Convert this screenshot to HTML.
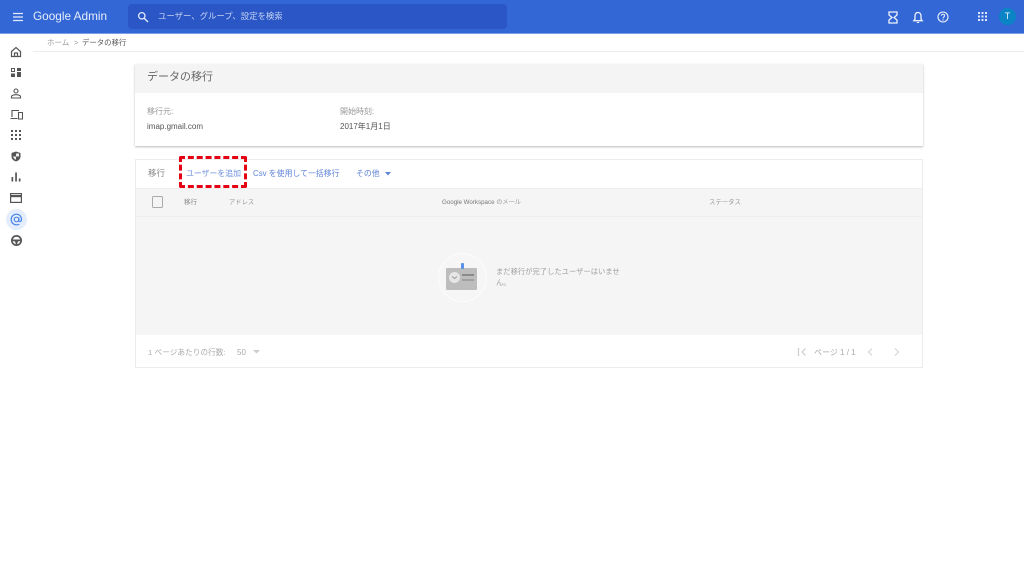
<!DOCTYPE html>
<html lang="ja"><head><meta charset="utf-8"><title>Google Admin</title>
<style>
html,body{margin:0;padding:0;width:1024px;height:576px;overflow:hidden;background:#fff}
body{font-family:"Liberation Sans","Noto Sans CJK JP",sans-serif;position:relative}
.a{position:absolute;white-space:nowrap;line-height:1}
.box{position:absolute;box-sizing:border-box}
svg{position:absolute;display:block}
</style></head><body>
<div class="box" style="left:0;top:0;width:1024px;height:33px;background:#3367d6"></div>
<div class="box" style="left:0;top:33px;width:1024px;height:1px;background:#7a9ce6"></div>
<svg style="left:12px;top:11px" width="12" height="12" viewBox="0 0 12 12"><path d="M1 2.500h10M1 6h10M1 9.500h10" stroke="#e3eafa" stroke-width="1.300"/></svg>
<div class="a" style="left:33px;top:11px;font-size:11.800px;color:#e6edfb">Google Admin</div>
<div class="box" style="left:128px;top:4px;width:379px;height:25px;background:#2a56c6;border-radius:4px"></div>
<svg style="left:137px;top:11px" width="12" height="12" viewBox="0 0 12 12"><circle cx="4.800" cy="4.800" r="3.200" fill="none" stroke="#e3eafa" stroke-width="1.300"/><path d="M7.200 7.200L11 11" stroke="#e3eafa" stroke-width="1.400"/></svg>
<div class="a" style="left:158px;top:12px;font-size:8.400px;color:#c6d4f3">ユーザー、グループ、設定を検索</div>
<svg style="left:887px;top:11px" width="12" height="13" viewBox="0 0 12 13"><path d="M2 1h8v3L7 6.500 10 9v3H2V9l3-2.500L2 4z" fill="none" stroke="#eef2fc" stroke-width="1.300"/></svg>
<svg style="left:912px;top:11px" width="12" height="13" viewBox="0 0 12 13"><path d="M6 1.500c-2 0-3 1.500-3 3.500v3L1.800 9.700h8.400L9 8V5c0-2-1-3.500-3-3.500z" fill="none" stroke="#eef2fc" stroke-width="1.300"/><path d="M4.800 11h2.400v1H4.800z" fill="#eef2fc"/></svg>
<svg style="left:937px;top:11px" width="12" height="12" viewBox="0 0 12 12"><circle cx="6" cy="6" r="5" fill="none" stroke="#eef2fc" stroke-width="1.100"/><path d="M4.400 4.800C4.400 3.800 5.100 3.200 6 3.200s1.600.6 1.600 1.500C7.600 6 6 6 6 7.400" fill="none" stroke="#eef2fc" stroke-width="1"/><circle cx="6" cy="8.900" r=".7" fill="#eef2fc"/></svg>
<svg style="left:978px;top:12px" width="9" height="9" viewBox="0 0 9 9" fill="#dfe7f9"><rect x="0" y="0" width="2" height="2"/><rect x="3.500" y="0" width="2" height="2"/><rect x="7" y="0" width="2" height="2"/><rect x="0" y="3.500" width="2" height="2"/><rect x="3.500" y="3.500" width="2" height="2"/><rect x="7" y="3.500" width="2" height="2"/><rect x="0" y="7" width="2" height="2"/><rect x="3.500" y="7" width="2" height="2"/><rect x="7" y="7" width="2" height="2"/></svg>
<div class="box" style="left:999px;top:8px;width:17px;height:17px;border-radius:50%;background:#0b84c6"></div>
<div class="a" style="left:999px;top:12px;width:17px;text-align:center;font-size:9px;color:#e8f3fa">T</div>

<div class="a" style="left:47px;top:38.500px;font-size:7.500px;color:#999">ホーム</div>
<div class="a" style="left:74px;top:38.500px;font-size:7.500px;color:#999">&gt;</div>
<div class="a" style="left:82px;top:38.500px;font-size:7.400px;color:#555">データの移行</div>
<div class="box" style="left:33px;top:51px;width:991px;height:1px;background:#ececec"></div>

<svg style="left:10px;top:46px" width="12" height="12" viewBox="0 0 12 12"><path d="M1.500 5.500L6 1.500l4.500 4v5h-9z M4.500 10.500V7h3v3.500" fill="none" stroke="#555" stroke-width="1.200"/></svg>
<svg style="left:10px;top:67px" width="12" height="11" viewBox="0 0 12 11" fill="#555"><path d="M1 1h4v4H1zM2 2v2h2V2zM7 1h4v3H7zM1 6.500h4V10H1zM7 5h4v5H7z" fill-rule="evenodd"/></svg>
<svg style="left:10px;top:88px" width="12" height="11" viewBox="0 0 12 11"><circle cx="6" cy="3" r="2" fill="none" stroke="#555" stroke-width="1.100"/><path d="M1.500 10V8.500c0-1 2.200-1.800 4.500-1.800s4.500.8 4.500 1.800V10z" fill="none" stroke="#555" stroke-width="1.100"/></svg>
<svg style="left:10px;top:109px" width="13" height="11" viewBox="0 0 13 11"><path d="M2 8V1.500h7M.500 9.500h7M8.500 3.500h4V10h-4z" fill="none" stroke="#555" stroke-width="1.100"/></svg>
<svg style="left:11px;top:130px" width="10" height="10" viewBox="0 0 10 10" fill="#555"><rect x="0" y="0" width="2" height="2"/><rect x="4" y="0" width="2" height="2"/><rect x="8" y="0" width="2" height="2"/><rect x="0" y="4" width="2" height="2"/><rect x="4" y="4" width="2" height="2"/><rect x="8" y="4" width="2" height="2"/><rect x="0" y="8" width="2" height="2"/><rect x="4" y="8" width="2" height="2"/><rect x="8" y="8" width="2" height="2"/></svg>
<svg style="left:11px;top:151px" width="10" height="11" viewBox="0 0 10 11"><path d="M5 .500L9.500 2v3.500c0 2.500-2 4.300-4.500 5C2.500 9.800.500 8 .500 5.500V2z" fill="#555"/><path d="M5 2.500h3v3H5zM2 5.500h3v3.200C3.500 8.200 2.300 7 2 5.500z" fill="#fff" opacity=".9"/></svg>
<svg style="left:11px;top:172px" width="10" height="10" viewBox="0 0 10 10" fill="#555"><rect x="0.500" y="5" width="1.700" height="4.500"/><rect x="4.200" y="0.500" width="1.700" height="9"/><rect x="7.800" y="6.500" width="1.700" height="3"/></svg>
<svg style="left:10px;top:193px" width="12" height="10" viewBox="0 0 12 10"><rect x=".6" y=".6" width="10.800" height="8.800" fill="none" stroke="#555" stroke-width="1.200"/><rect x="1" y="2" width="10" height="2.200" fill="#555"/></svg>
<div class="box" style="left:6px;top:209px;width:21px;height:21px;border-radius:50%;background:#e3edfc"></div>
<svg style="left:10px;top:213px" width="13" height="13" viewBox="0 0 13 13"><circle cx="6.500" cy="6.500" r="2.300" fill="none" stroke="#4a86e8" stroke-width="1.200"/><path d="M8.800 4.500v3c0 1.500 2.700 1.500 2.700-1C11.500 3.500 9.500 1.200 6.500 1.200S1.200 3.500 1.200 6.500s2.300 5.300 5.300 5.300c1 0 2-.2 2.800-.7" fill="none" stroke="#4a86e8" stroke-width="1.200"/></svg>
<svg style="left:10px;top:234px" width="13" height="13" viewBox="0 0 13 13"><circle cx="6.500" cy="6.500" r="5.500" fill="#555"/><circle cx="6.500" cy="6.500" r="3.800" fill="#fff"/><path d="M2.500 5.500h8v1.500L8 7.500 7 10.500H6L5 7.500 2.500 7z" fill="#555"/></svg>

<div class="box" style="left:135px;top:64px;width:788px;height:82px;background:#fff;box-shadow:0 1px 2px rgba(0,0,0,.28)"></div>
<div class="box" style="left:135px;top:64px;width:788px;height:29px;background:#f4f4f4"></div>
<div class="a" style="left:147px;top:72px;font-size:11px;color:#666">データの移行</div>
<div class="a" style="left:147px;top:107.500px;font-size:8px;color:#999">移行元:</div>
<div class="a" style="left:147px;top:123px;font-size:8px;color:#555">imap.gmail.com</div>
<div class="a" style="left:340px;top:107.500px;font-size:8px;color:#999">開始時刻:</div>
<div class="a" style="left:340px;top:123px;font-size:8px;color:#555">2017年1月1日</div>

<div class="box" style="left:135px;top:159px;width:788px;height:209px;background:#fff;border:1px solid #ececec"></div>
<div class="a" style="left:148px;top:169px;font-size:8.500px;color:#888">移行</div>
<div class="a" style="left:186px;top:169.500px;font-size:7.900px;color:#6f90dc">ユーザーを追加</div>
<div class="a" style="left:253px;top:169.500px;font-size:7.900px;color:#5f84d8">Csv を使用して一括移行</div>
<div class="a" style="left:356px;top:169.500px;font-size:7.900px;color:#5f84d8">その他</div>
<svg style="left:385px;top:172px" width="6" height="4" viewBox="0 0 6 4"><path d="M0 0h6L3 3.500z" fill="#5f84d8"/></svg>

<div class="box" style="left:136px;top:188px;width:786px;height:147px;background:#f5f5f5;border-top:1px solid #eee"></div>
<div class="box" style="left:136px;top:216px;width:786px;height:1px;background:#eeeeee"></div>
<div class="box" style="left:152px;top:196px;width:11px;height:12px;border:1.300px solid #aaa;border-radius:1.500px"></div>
<div class="a" style="left:184px;top:199.500px;font-size:6.500px;color:#888">移行</div>
<div class="a" style="left:229px;top:199.500px;font-size:6.300px;color:#999">アドレス</div>
<div class="a" style="left:442px;top:199.500px;font-size:6.200px;color:#777">Google Workspace <span style="color:#999">のメール</span></div>
<div class="a" style="left:709px;top:199.500px;font-size:6.400px;color:#999">ステータス</div>

<div class="box" style="left:438px;top:253px;width:49px;height:49px;border-radius:50%;background:#f6f6f6;border:1px solid #fcfcfc"></div>
<div class="box" style="left:446px;top:268px;width:31px;height:22px;background:#bdbdbd;border-radius:1px"></div>
<div class="box" style="left:461px;top:263px;width:3px;height:6px;background:#5c8fe8;border-radius:1px"></div>
<div class="box" style="left:449px;top:272px;width:11px;height:11px;border-radius:50%;background:#e6e6e6"></div>
<svg style="left:451px;top:275px" width="7" height="5" viewBox="0 0 7 5"><path d="M1 1.500l2.500 2L6 1.500" fill="none" stroke="#999" stroke-width="1"/></svg>
<div class="box" style="left:462px;top:274px;width:12px;height:2px;background:#8a8a8a"></div>
<div class="box" style="left:462px;top:279px;width:12px;height:2px;background:#a0a0a0"></div>
<div class="a" style="left:496px;top:267.500px;font-size:7.300px;color:#a0a0a0">まだ移行が完了したユーザーはいませ</div>
<div class="a" style="left:496px;top:278.500px;font-size:7.300px;color:#a0a0a0">ん。</div>

<div class="a" style="left:148px;top:348.500px;font-size:7.700px;color:#aaa">1 ページあたりの行数:</div>
<div class="a" style="left:237px;top:348.500px;font-size:8px;color:#aaa">50</div>
<svg style="left:253px;top:350px" width="7" height="4" viewBox="0 0 7 4"><path d="M0 0h7L3.500 3.500z" fill="#ccc"/></svg>
<svg style="left:797px;top:347px" width="10" height="10" viewBox="0 0 10 10"><path d="M1.500 1v8M8.500 1.500L5 5l3.500 3.500" fill="none" stroke="#ccc" stroke-width="1.200"/></svg>
<div class="a" style="left:814px;top:348.500px;font-size:8px;color:#aaa">ページ 1 / 1</div>
<svg style="left:866px;top:347px" width="8" height="10" viewBox="0 0 8 10"><path d="M6 1.500L2.500 5 6 8.500" fill="none" stroke="#d4d4d4" stroke-width="1.200"/></svg>
<svg style="left:893px;top:347px" width="8" height="10" viewBox="0 0 8 10"><path d="M2 1.500L5.500 5 2 8.500" fill="none" stroke="#d4d4d4" stroke-width="1.200"/></svg>

<div class="box" style="left:179px;top:156px;width:68px;height:32px;border:3px dashed #e60012;border-radius:2px"></div>
</body></html>
